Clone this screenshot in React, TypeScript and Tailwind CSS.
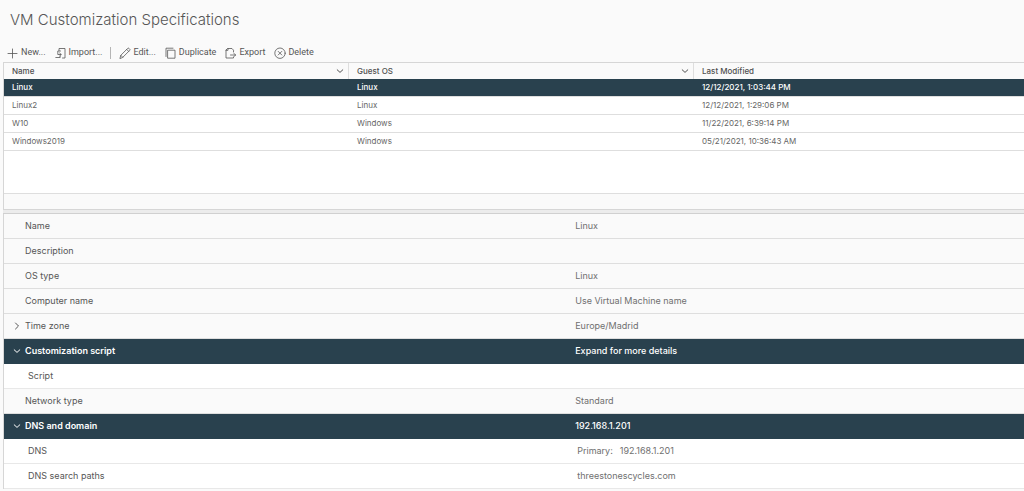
import React, { useState } from "react";

const specs = [
  { name: "Linux", os: "Linux", modified: "12/12/2021, 1:03:44 PM" },
  { name: "Linux2", os: "Linux", modified: "12/12/2021, 1:29:06 PM" },
  { name: "W10", os: "Windows", modified: "11/22/2021, 6:39:14 PM" },
  { name: "Windows2019", os: "Windows", modified: "05/21/2021, 10:36:43 AM" },
];

type Detail = {
  label: string;
  value: string;
  expandable?: boolean;
  children?: { label: string; prefix?: string; value: string }[];
};

const details: Detail[] = [
  { label: "Name", value: "Linux" },
  { label: "Description", value: "" },
  { label: "OS type", value: "Linux" },
  { label: "Computer name", value: "Use Virtual Machine name" },
  { label: "Time zone", value: "Europe/Madrid", expandable: true },
  {
    label: "Customization script",
    value: "Expand for more details",
    expandable: true,
    children: [{ label: "Script", value: "" }],
  },
  { label: "Network type", value: "Standard" },
  {
    label: "DNS and domain",
    value: "192.168.1.201",
    expandable: true,
    children: [
      { label: "DNS", prefix: "Primary:", value: "192.168.1.201" },
      { label: "DNS search paths", value: "threestonescycles.com" },
    ],
  },
];

function Icon({ children }: { children: React.ReactNode }) {
  return (
    <svg
      viewBox="0 0 12 12"
      className="size-3 shrink-0"
      fill="none"
      stroke="currentColor"
      strokeWidth="0.8"
      strokeLinecap="round"
      strokeLinejoin="round"
      aria-hidden="true"
    >
      {children}
    </svg>
  );
}

function Chevron({ open }: { open: boolean }) {
  return (
    <svg
      viewBox="0 0 8 8"
      className="size-2 shrink-0"
      fill="none"
      stroke="currentColor"
      strokeWidth="1"
      strokeLinecap="round"
      strokeLinejoin="round"
      aria-hidden="true"
    >
      <path d={open ? "M1.2 2.8 4 5.4 6.8 2.8" : "M2.5 1 5.5 4 2.5 7"} />
    </svg>
  );
}

function Action({ label, children }: { label: string; children: React.ReactNode }) {
  return (
    <button type="button" className="flex items-center gap-[2px] whitespace-nowrap">
      <Icon>{children}</Icon>
      {label}
    </button>
  );
}

function Toolbar() {
  return (
    <div className="flex h-[19px] items-center gap-2 pl-1 font-[Roboto,sans-serif] text-[9px] text-[#565656]">
      <div className="flex items-center gap-[9px]">
        <Action label="New...">
          <path d="M5.5 2v9M1 6.5h9" />
        </Action>
        <Action label="Import...">
          <path d="M4 3.5V1.5h6v9.5H7.5" />
          <path d="M5.5 4H2.8v3.5h3.3M4.6 6l1.6 1.5L4.6 9M.8 10.5h4.4V9" />
        </Action>
      </div>
      <div className="h-3 w-px bg-[#b5b5b5]" />
      <div className="flex items-center gap-[9px]">
        <Action label="Edit...">
          <path d="M1 11.2 1.8 8.3 8.7 1.4q.7-.6 1.3 0l.7.7q.6.6 0 1.3L3.8 10.3zM7.7 2.4l2 2M1.8 8.3l2 2" />
        </Action>
        <Action label="Duplicate">
          <path d="M3 3.2h7v8H3zM1 9.5V1.2h7" />
        </Action>
        <Action label="Export">
          <path d="M8.5 5V3.2L7 1.5H2.5L1 3v8h7.5v-.8M3 1.5v1.8H1" />
          <path d="M5.5 8h5M9 6.4 10.6 8 9 9.6" />
        </Action>
        <Action label="Delete">
          <circle cx="6" cy="6.2" r="5.2" />
          <path d="m4.2 4.4 3.6 3.6M7.8 4.4 4.2 8" />
        </Action>
      </div>
    </div>
  );
}

function SpecTable() {
  const [selected, setSelected] = useState("Linux");

  return (
    <div className="border-y border-l border-[#d6d6d6] bg-white">
      <table className="w-full table-fixed border-separate border-spacing-0 text-left text-[8px]">
        <thead className="bg-[#fafafa] leading-4 text-[#505050]">
          <tr>
            <th className="w-[345px] border-r border-[#dedede] p-0 pr-1 pl-2 font-medium">
              <span className="flex items-center justify-between">
                Name <Chevron open />
              </span>
            </th>
            <th className="w-[345px] border-r border-[#dedede] p-0 pr-1 pl-2 font-medium">
              <span className="flex items-center justify-between">
                Guest OS <Chevron open />
              </span>
            </th>
            <th className="p-0 pl-2 font-medium">Last Modified</th>
          </tr>
        </thead>
        <tbody className="leading-[17px]">
          {specs.map((spec) => (
            <tr
              key={spec.name}
              onClick={() => setSelected(spec.name)}
              className={
                spec.name === selected
                  ? "bg-[#29414e] font-medium text-white"
                  : "text-[#666666]"
              }
            >
              <td className="border-b border-[#dedede] p-0 pl-2">{spec.name}</td>
              <td className="border-b border-[#dedede] p-0 pl-2">{spec.os}</td>
              <td className="border-b border-[#dedede] p-0 pl-2">{spec.modified}</td>
            </tr>
          ))}
        </tbody>
      </table>
      <div className="mt-[42px] h-4 border-t border-[#dedede] bg-[#fafafa]" />
    </div>
  );
}

function DetailRow({ item }: { item: Detail }) {
  const [open, setOpen] = useState(Boolean(item.children));
  const active = open && item.children;

  return (
    <>
      <tr className={active ? "bg-[#29414e] text-white" : "bg-[#fafafa] text-[#707070]"}>
        <th
          scope="row"
          className={
            active
              ? "w-[56%] border-b border-[#29414e] p-0 pl-[9px] font-semibold"
              : "w-[56%] border-b border-[#dedede] p-0 pl-[9px] font-normal text-[#565656]"
          }
        >
          {item.expandable ? (
            <button
              type="button"
              aria-expanded={open}
              onClick={() => setOpen(!open)}
              className="flex items-center gap-1"
            >
              <Chevron open={open} />
              {item.label}
            </button>
          ) : (
            <span className="pl-3">{item.label}</span>
          )}
        </th>
        <td
          className={
            active
              ? "border-b border-[#29414e] p-0 font-medium"
              : "border-b border-[#dedede] p-0"
          }
        >
          {item.value}
        </td>
      </tr>
      {active &&
        item.children?.map((child) => (
          <tr key={child.label} className="bg-white text-[#707070]">
            <th
              scope="row"
              className="border-b border-[#e8e8e8] p-0 pl-6 font-normal text-[#565656]"
            >
              {child.label}
            </th>
            <td className="border-b border-[#e8e8e8] p-0 pl-[2px]">
              {child.prefix && <span className="mr-[7px]">{child.prefix}</span>}
              {child.value}
            </td>
          </tr>
        ))}
    </>
  );
}

export default function App() {
  return (
    <main className="min-h-screen bg-[#fafafa] pl-[3px] font-['Inter',sans-serif]">
      <h1 className="px-[7px] pt-2 pb-[11px] text-[15px] leading-6 font-light text-[#565656]">
        VM Customization Specifications
      </h1>
      <Toolbar />
      <SpecTable />
      <div className="h-1 border-b border-[#d0d0d0] bg-[#ececec]" />
      <div className="border-l border-[#d6d6d6]">
        <table className="w-full table-fixed border-separate border-spacing-0 text-left text-[9px] leading-6">
          <tbody>
            {details.map((item) => (
              <DetailRow key={item.label} item={item} />
            ))}
          </tbody>
        </table>
      </div>
    </main>
  );
}
